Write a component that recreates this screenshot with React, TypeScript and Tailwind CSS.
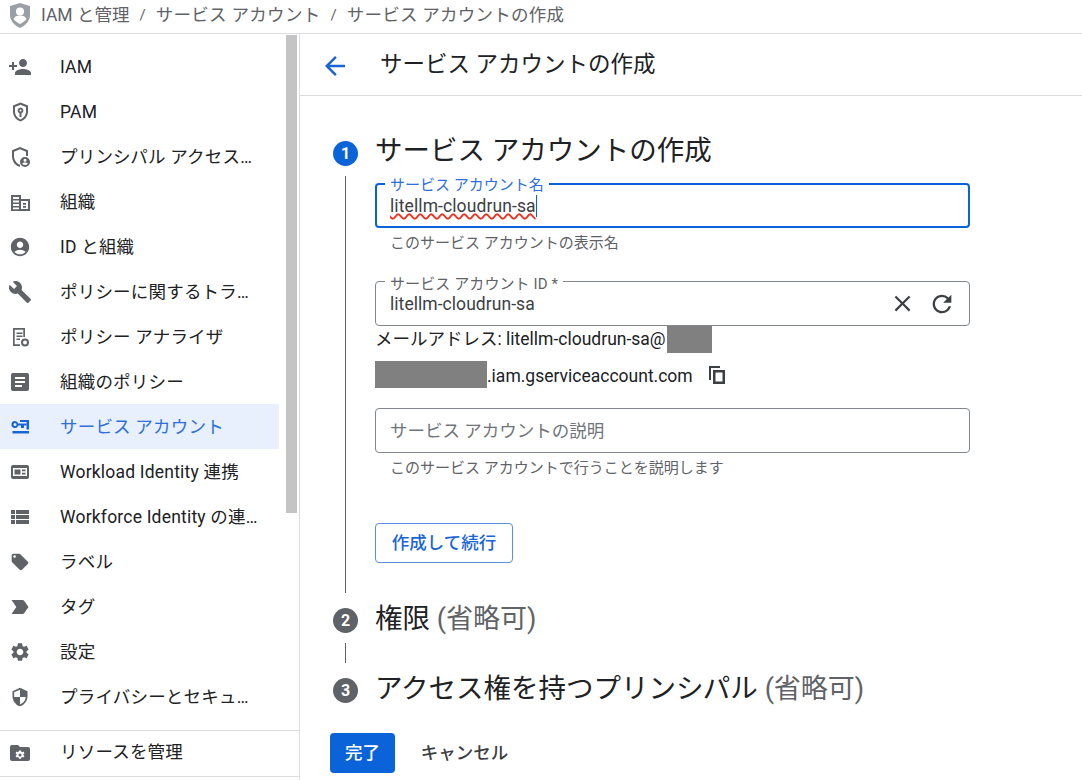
import React from "react";
import {
  MdPersonAdd, MdAccountCircle, MdBuild, MdArticle, MdLocalOffer, MdLabelImportant, MdSettings, MdSecurity,
  MdViewList, MdArrowBack, MdClose, MdRefresh,
} from "react-icons/md";

const S = ({ children }: { children: React.ReactNode }) => (
  <svg viewBox="0 0 24 24" width="24" height="24" fill="#5f6368">{children}</svg>
);

const IconPam = () => (
  <S>
    <path fillRule="evenodd" d="M12.500 2.500l7.500 3v6c0 4.600-3.200 8.600-7.500 10-4.300-1.400-7.500-5.400-7.500-10v-6l7.500-3zm0 2.200L7 6.900v4.600c0 3.500 2.300 6.600 5.500 7.900 3.200-1.300 5.500-4.400 5.500-7.900V6.900l-5.500-2.200z" />
    <path fillRule="evenodd" d="M12.500 7.500a3 3 0 0 1 1 5.800V17h-2v-3.700a3 3 0 0 1 1-5.800zm0 2a1 1 0 1 0 0 2 1 1 0 0 0 0-2z" />
  </S>
);
const IconPrincipal = () => (
  <S>
    <path d="M12 2l8 3.300V11h-2V6.700l-6-2.500-6 2.500V11c0 3.900 2.500 7.500 6 8.800V22c-5-1.300-8-6-8-11V5.300L12 2z" />
    <path fillRule="evenodd" d="M17 12a5 5 0 1 1 0 10 5 5 0 0 1 0-10zm0 1.800a1.500 1.500 0 1 0 0 3 1.500 1.500 0 0 0 0-3zm0 3.700c-1.200 0-2.300.5-2.900 1.300a4 4 0 0 0 5.800 0c-.6-.8-1.700-1.300-2.900-1.300z" />
  </S>
);
const IconOrg = () => (
  <S>
    <path fillRule="evenodd" d="M3 5h10v4h9v12H3V5zm2 2v2h6V7H5zm0 3.500v2h6v-2H5zm0 3.500v2h6v-2H5zm0 3.500v1.800h6v-1.800H5zM13 11v8h7v-8h-7z" />
    <path d="M15 13h3v1.700h-3zM15 16h3v1.700h-3z" />
  </S>
);
const IconAnalyzer = () => (
  <S>
    <path d="M5 3h12v9h-1.700V4.700H6.700v14.600H12V21H5V3z" />
    <path d="M8.500 7.500h6V9h-6zM8.500 10.500h6V12h-6zM8.500 13.500h3.500V15H8.500z" />
    <path fillRule="evenodd" d="M17 13.500a4 4 0 1 1 0 8 4 4 0 0 1 0-8zm0 2a2 2 0 1 0 0 4 2 2 0 0 0 0-4z" />
  </S>
);
const IconKey = ({ color }: { color: string }) => (
  <svg viewBox="0 0 24 24" width="24" height="24" fill={color}>
    <path fillRule="evenodd" d="M7 6a3.500 3.500 0 0 1 3.300 2.500h8.200v2H16V13h-3v-2.500h-2.700A3.500 3.500 0 1 1 7 6zm0 2a1.500 1.500 0 1 0 0 3 1.500 1.500 0 0 0 0-3z" />
    <path d="M12 5h9v9.500h-2.500V7H12zM4.500 16H21v2.500H4.500z" />
  </svg>
);
const IconWorkload = () => (
  <S>
    <path fillRule="evenodd" d="M5 5h14a2 2 0 0 1 2 2v10a2 2 0 0 1-2 2H5a2 2 0 0 1-2-2V7a2 2 0 0 1 2-2zm0 3v8h14V8H5z" />
    <path d="M6.500 9.500h6v5h-6zM14 9.500h3.500v1.700H14zM14 12.800h3.500v1.700H14z" />
  </S>
);
const IconFolder = () => (
  <S>
    <path fillRule="evenodd" d="M4 4h6l2 2h8a2 2 0 0 1 2 2v10a2 2 0 0 1-2 2H4a2 2 0 0 1-2-2V6a2 2 0 0 1 2-2zm7 5.500l-.4 1.300-.9.400-1.200-.6-1 1.700 1.100.8v1l-1.100.8 1 1.700 1.200-.6.900.4.400 1.300h2l.4-1.300.9-.4 1.200.6 1-1.700-1.100-.8v-1l1.100-.8-1-1.700-1.200.6-.9-.4-.4-1.300h-2zm1 3a1.500 1.500 0 1 1 0 3 1.500 1.500 0 0 1 0-3z" />
  </S>
);
const IconCopy = () => (
  <svg viewBox="0 0 16 18" width="16" height="18" fill="#3c4043" className="ml-[16px]">
    <path d="M0 0h11v2H2v12H0z" />
    <path fillRule="evenodd" d="M4 4h12v14H4V4zm2.500 2.500v9h7v-9h-7z" />
  </svg>
);

const gray = "#5f6368";
const items: { label: string; icon: React.ReactNode; active?: boolean }[] = [
  { label: "IAM", icon: <MdPersonAdd size={24} color={gray} /> },
  { label: "PAM", icon: <IconPam /> },
  { label: "プリンシパル アクセス…", icon: <IconPrincipal /> },
  { label: "組織", icon: <IconOrg /> },
  { label: "ID と組織", icon: <MdAccountCircle size={22} color={gray} className="m-px" /> },
  { label: "ポリシーに関するトラ…", icon: <MdBuild size={24} color={gray} /> },
  { label: "ポリシー アナライザ", icon: <IconAnalyzer /> },
  { label: "組織のポリシー", icon: <MdArticle size={24} color={gray} /> },
  { label: "サービス アカウント", icon: <IconKey color="#1a65d6" />, active: true },
  { label: "Workload Identity 連携", icon: <IconWorkload /> },
  { label: "Workforce Identity の連…", icon: <MdViewList size={24} color={gray} /> },
  { label: "ラベル", icon: <MdLocalOffer size={20} color={gray} className="m-[2px]" /> },
  { label: "タグ", icon: <MdLabelImportant size={24} color={gray} /> },
  { label: "設定", icon: <MdSettings size={22} color={gray} className="m-px" /> },
  { label: "プライバシーとセキュ…", icon: <MdSecurity size={20} color={gray} className="m-[2px]" /> },
];

function NavRow({ label, icon, active }: { label: string; icon: React.ReactNode; active?: boolean }) {
  return (
    <div className={`flex h-[45px] items-center pl-[8px] tracking-[0.2px] ${active ? "bg-[#e8f0fe] text-[#2f6fdb]" : "text-[#202124]"}`}>
      <span className="flex w-[52px] shrink-0">{icon}</span>
      <span className="mt-[2px] whitespace-nowrap">{label}</span>
    </div>
  );
}

function Circle({ n, active }: { n: number; active?: boolean }) {
  return (
    <span className={`flex h-[25px] w-[25px] shrink-0 items-center justify-center rounded-full text-[16px] font-bold text-white ${active ? "bg-[#0b63d9]" : "bg-[#5f6368]"}`}>
      {n}
    </span>
  );
}

export default function App() {
  return (
    <div className="flex h-[780px] w-[1082px] flex-col overflow-hidden bg-white text-[17.5px] text-[#202124] [font-family:Roboto,'Noto_Sans_CJK_JP',sans-serif]">
      <header className="flex h-[34px] shrink-0 items-center border-b border-[#dadce0] pb-[3px] pl-[10px] text-[#5f6368]">
        <svg viewBox="0 0 20 25" width="20" height="25" className="mr-[11px]">
          <path d="M10 0l10 3v9c0 6-5 11-10 13C5 23 0 18 0 12V3l10-3z" fill="#9aa0a6" />
          <circle cx="10" cy="8.500" r="4" fill="#fff" />
          <path d="M3.500 16c1-2.500 3.500-3.500 6.500-3.500s5.500 1 6.500 3.500c-1.500 2-4 3.700-6.500 5-2.500-1.300-5-3-6.500-5z" fill="#fff" />
        </svg>
        <span>IAM と管理</span>
        <span className="mx-[10px] text-[15px]">/</span>
        <span className="tracking-[0.3px]">サービス アカウント</span>
        <span className="mx-[10px] text-[15px]">/</span>
        <span className="tracking-[0.25px]">サービス アカウントの作成</span>
      </header>

      <div className="flex min-h-0 flex-1">
        <aside className="flex w-[300px] shrink-0 flex-col border-r border-[#dadce0]">
          <div className="flex">
            <nav className="w-[279px] pt-[10px]">
              {items.map((it) => (
                <NavRow key={it.label} {...it} />
              ))}
            </nav>
            <div className="ml-[7px] mt-[1px] h-[478px] w-[11px] bg-[#c4c4c4]" />
          </div>
          <div className="mt-[11px] border-y border-[#dadce0]">
            <div className="flex h-[45px] items-center pb-[2px] pl-[8px] tracking-[0.2px]">
              <span className="flex w-[52px] shrink-0"><IconFolder /></span>
              <span>リソースを管理</span>
            </div>
          </div>
        </aside>

        <main className="min-w-0 flex-1">
          <div className="flex h-[62px] items-center border-b border-[#dadce0] pl-[20px] text-[22.5px]">
            <MdArrowBack size={30} color="#1a65d6" className="mr-[30px] mt-[2px]" />
            <span>サービス アカウントの作成</span>
          </div>

          <div className="flex gap-[17px] pl-[33px]">
            <div className="flex w-[25px] flex-col items-center pt-[45px]">
              <Circle n={1} active />
              <div className="mt-[10px] h-[417px] w-px bg-[#5f6368]" />
            </div>
            <div className="w-[595px] pt-[37px]">
              <h1 className="h-[36px] text-[27.5px] leading-[36px]">サービス アカウントの作成</h1>

              <div className="relative mt-[14px] flex h-[45px] items-center rounded-[4px] border-2 border-[#0b63d9] pl-[13px]">
                <span className="absolute left-[8px] top-[-8px] bg-white px-[5px] text-[15px] leading-[17px] text-[#2f6fdb]">サービス アカウント名</span>
                <span className="mt-[1px] tracking-[0.1px] text-[#3c4043] underline decoration-[#ea3323] decoration-wavy decoration-[1.5px] underline-offset-1">litellm-cloudrun-sa</span>
                <span className="h-[22px] w-px bg-[#0b63d9]" />
              </div>
              <p className="mt-[6px] h-[18px] pl-[15px] text-[15px] leading-[18px] text-[#5f6368]">このサービス アカウントの表示名</p>

              <div className="relative mt-[29px] flex h-[45px] items-center rounded-[4px] border border-[#80868b] pl-[14px] pr-[13px]">
                <span className="absolute left-[9px] top-[-6px] bg-white px-[5px] text-[15px] leading-[17px] tracking-[0.1px] text-[#5f6368]">サービス アカウント ID *</span>
                <span className="mt-[2px] flex-1 tracking-[0.05px] text-[#3c4043]">litellm-cloudrun-sa</span>
                <MdClose size={27} color="#3c4043" className="mr-[12px]" />
                <MdRefresh size={28} color="#3c4043" />
              </div>

              <div className="flex h-[27px] items-center">
                <span>メールアドレス: litellm-cloudrun-sa@</span>
                <span className="ml-auto mr-[258px] h-[27px] w-[45px] bg-[#808080]" />
              </div>
              <div className="mt-[8px] flex h-[27px] items-center">
                <span className="h-[27px] w-[112px] bg-[#808080]" />
                <span className="mt-[4px]">.iam.gserviceaccount.com</span>
                <IconCopy />
              </div>

              <div className="mt-[20px] flex h-[45px] items-center rounded-[4px] border border-[#80868b] pl-[14px] pt-[2px] text-[#70757a]">
                サービス アカウントの説明
              </div>
              <p className="mt-[6px] h-[18px] pl-[15px] text-[15px] leading-[18px] text-[#5f6368]">このサービス アカウントで行うことを説明します</p>

              <button className="mt-[46px] flex h-[40px] w-[138px] items-center justify-center rounded-[4px] border border-[#5a8fdd] font-medium text-[#1a65d6]">
                作成して続行
              </button>
            </div>
          </div>

          <div className="flex gap-[17px] pl-[33px]">
            <div className="flex w-[25px] flex-col items-center pt-[15px]">
              <Circle n={2} />
              <div className="mt-[10px] h-[20px] w-px bg-[#5f6368]" />
            </div>
            <h2 className="pt-[8px] text-[27.5px] leading-[36px]">
              権限 <span className="text-[27px] text-[#5f6368]">(省略可)</span>
            </h2>
          </div>

          <div className="flex gap-[17px] pl-[33px]">
            <div className="flex w-[25px] flex-col items-center pt-[15px]">
              <Circle n={3} />
            </div>
            <h2 className="pt-[8px] text-[27.5px] leading-[36px]">
              アクセス権を持つプリンシパル <span className="text-[27px] text-[#5f6368]">(省略可)</span>
            </h2>
          </div>

          <div className="mt-[26px] flex items-center gap-[13px] pl-[30px]">
            <button className="flex h-[40px] w-[65px] items-center justify-center rounded-[4px] bg-[#0b63d9] font-medium text-white">完了</button>
            <button className="flex h-[40px] w-[113px] items-center justify-center font-medium text-[#3c4043]">キャンセル</button>
          </div>
        </main>
      </div>
    </div>
  );
}
